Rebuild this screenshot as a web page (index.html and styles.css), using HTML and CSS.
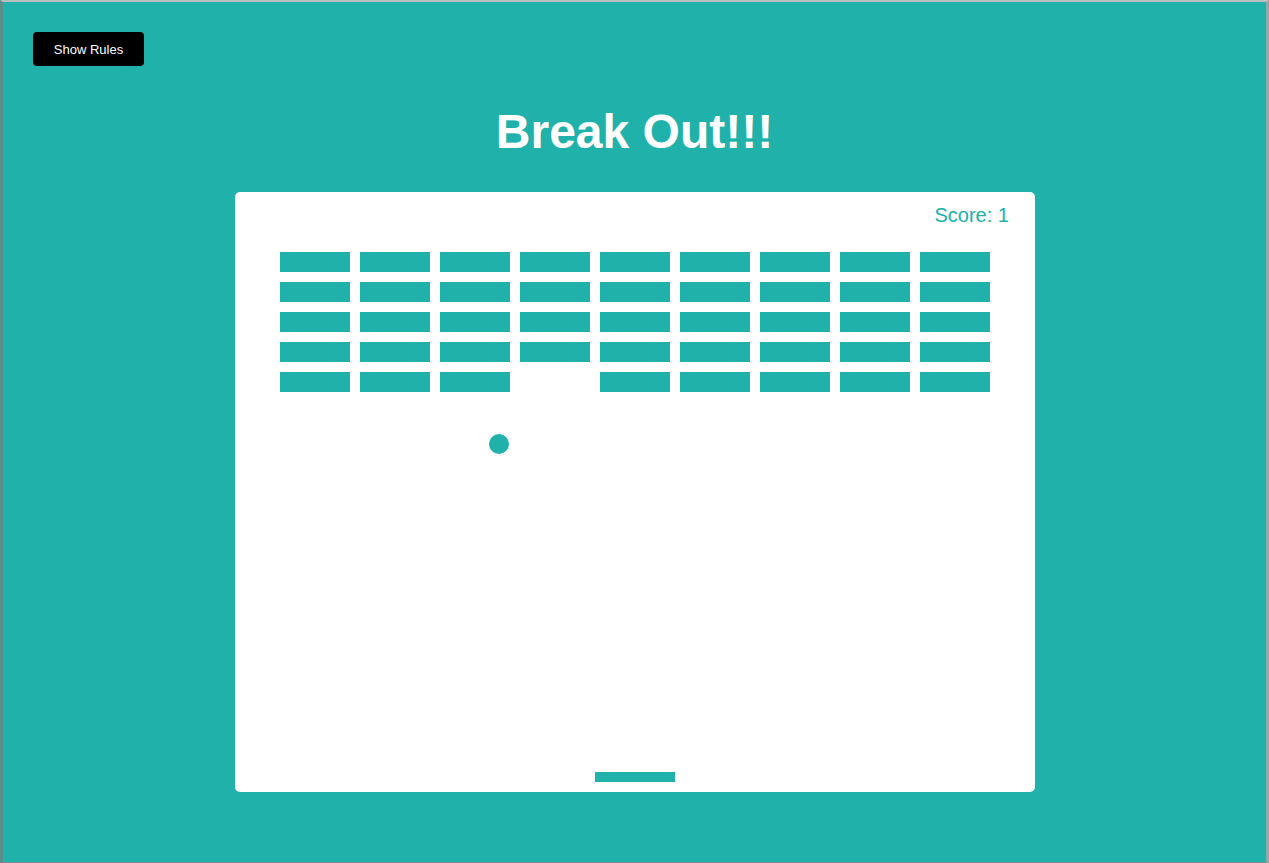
FILE: index.html
```html
<!DOCTYPE html>
<html lang="en">
<head>
<meta charset="utf-8">
<title>Break Out!!!</title>
<link rel="stylesheet" href="styles.css">
</head>
<body>
<div class="frame">
  <div class="topbar">
    <button class="btn">Show Rules</button>
  </div>
  <h1 class="title">Break Out!!!</h1>
  <div class="board">
    <div class="score">Score: 1</div>
    <div class="bricks">
      <div class="brick"></div><div class="brick"></div><div class="brick"></div><div class="brick"></div><div class="brick"></div><div class="brick"></div><div class="brick"></div><div class="brick"></div><div class="brick"></div>
      <div class="brick"></div><div class="brick"></div><div class="brick"></div><div class="brick"></div><div class="brick"></div><div class="brick"></div><div class="brick"></div><div class="brick"></div><div class="brick"></div>
      <div class="brick"></div><div class="brick"></div><div class="brick"></div><div class="brick"></div><div class="brick"></div><div class="brick"></div><div class="brick"></div><div class="brick"></div><div class="brick"></div>
      <div class="brick"></div><div class="brick"></div><div class="brick"></div><div class="brick"></div><div class="brick"></div><div class="brick"></div><div class="brick"></div><div class="brick"></div><div class="brick"></div>
      <div class="brick"></div><div class="brick"></div><div class="brick"></div><div class="brick gone"></div><div class="brick"></div><div class="brick"></div><div class="brick"></div><div class="brick"></div><div class="brick"></div>
    </div>
    <div class="ball"></div>
    <div class="paddle"></div>
  </div>
</div>
</body>
</html>
```
FILE: styles.css
```css
html, body {
  margin: 0;
  padding: 0;
  height: 100%;
}
body {
  background: #20b2aa;
  font-family: "Liberation Sans", Arial, sans-serif;
  overflow: hidden;
}
.frame {
  box-sizing: border-box;
  height: 863px;
  border-top: 2px solid #b9bfbe;
  border-left: 3px solid #5b8e8b;
  border-right: 3px solid #93aaa8;
  border-bottom: 1px solid #7a8f8e;
  display: flex;
  flex-direction: column;
  align-items: center;
}
.topbar {
  align-self: stretch;
  padding: 30px 0 0 30px;
}
.btn {
  display: block;
  width: 111px;
  height: 34px;
  background: #000;
  color: #fff;
  border: none;
  border-radius: 4px;
  font-family: "Liberation Sans", Arial, sans-serif;
  font-size: 13px;
  padding: 0;
  cursor: pointer;
}
.title {
  margin: 38px 0 0;
  font-size: 48px;
  line-height: 55px;
  font-weight: bold;
  color: #fff;
}
.board {
  margin-top: 33px;
  position: relative;
  width: 800px;
  height: 600px;
  background: #fff;
  border-radius: 5px;
  display: flex;
  flex-direction: column;
}
.score {
  align-self: flex-start;
  margin: 12px 0 0 700px;
  font-size: 20px;
  line-height: 23px;
  color: #20b2aa;
}
.bricks {
  margin: 25px 0 0 45px;
  display: grid;
  grid-template-columns: repeat(9, 70px);
  grid-auto-rows: 20px;
  gap: 10px;
}
.brick {
  background: #20b2aa;
}
.brick.gone {
  background: transparent;
}
.ball {
  position: absolute;
  left: 254px;
  top: 242px;
  width: 20px;
  height: 20px;
  border-radius: 50%;
  background: #20b2aa;
}
.paddle {
  position: absolute;
  left: 360px;
  top: 580px;
  width: 80px;
  height: 10px;
  background: #20b2aa;
}
```
